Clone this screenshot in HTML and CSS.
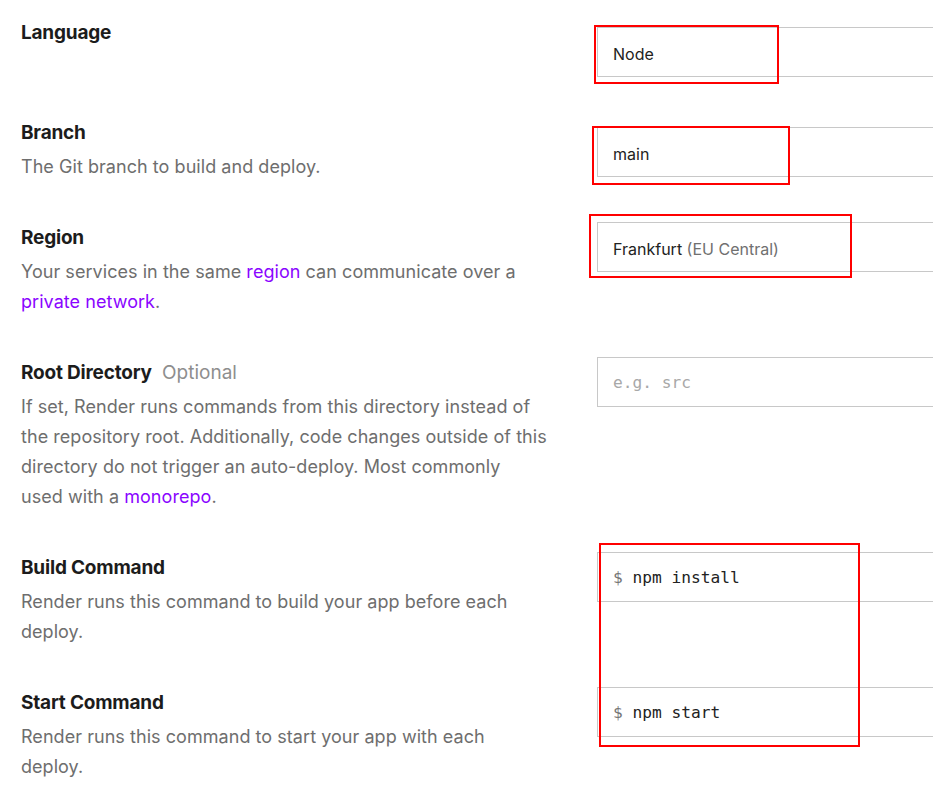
FILE: index.html
```html
<!DOCTYPE html>
<html lang="en">
<head>
<meta charset="utf-8">
<title>Service settings</title>
<link rel="stylesheet" href="styles.css">
</head>
<body>
<div class="page">
  <div class="row">
    <div class="info">
      <div class="title">Language</div>
    </div>
    <div class="field field-high">
      <div class="input">Node</div>
    </div>
  </div>

  <div class="row">
    <div class="info">
      <div class="title">Branch</div>
      <p class="desc">The Git branch to build and deploy.</p>
    </div>
    <div class="field field-high">
      <div class="input">main</div>
    </div>
  </div>

  <div class="row">
    <div class="info">
      <div class="title">Region</div>
      <p class="desc">Your services in the same <a href="#">region</a> can communicate over a <a href="#">private network</a>.</p>
    </div>
    <div class="field">
      <div class="input">Frankfurt <span class="muted">(EU Central)</span></div>
    </div>
  </div>

  <div class="row">
    <div class="info">
      <div class="title">Root Directory <span class="optional">Optional</span></div>
      <p class="desc">If set, Render runs commands from this directory instead of the repository root. Additionally, code changes outside of this directory do not trigger an auto-deploy. Most commonly<br>used with a <a href="#">monorepo</a>.</p>
    </div>
    <div class="field">
      <div class="input mono placeholder">e.g. src</div>
    </div>
  </div>

  <div class="row">
    <div class="info">
      <div class="title">Build Command</div>
      <p class="desc">Render runs this command to build your app before each deploy.</p>
    </div>
    <div class="field">
      <div class="input mono"><span class="prompt">$</span> npm install</div>
    </div>
  </div>

  <div class="row">
    <div class="info">
      <div class="title">Start Command</div>
      <p class="desc">Render runs this command to start your app with each deploy.</p>
    </div>
    <div class="field">
      <div class="input mono"><span class="prompt">$</span> npm start</div>
    </div>
  </div>

  <div class="mark mark-1"></div>
  <div class="mark mark-2"></div>
  <div class="mark mark-3"></div>
  <div class="mark mark-4"></div>
</div>
</body>
</html>
```

FILE: styles.css
```css
html, body {
  margin: 0;
  padding: 0;
  background: #ffffff;
  overflow: hidden;
}

body {
  font-family: Inter, "Noto Sans", "Liberation Sans", sans-serif;
  color: #1c1c1c;
}

.page {
  position: relative;
  padding: 20px 0 0 21px;
}

.row {
  display: grid;
  grid-template-columns: 527px 420px;
  column-gap: 49px;
  align-items: start;
  margin-bottom: 43px;
}

.title {
  font-size: 19px;
  line-height: 26px;
  font-weight: 700;
  color: #1c1c1c;
  letter-spacing: -0.2px;
  white-space: nowrap;
}

.optional {
  font-weight: 400;
  color: #8e8e8e;
  margin-left: 6px;
  letter-spacing: 0;
}

.desc {
  margin: 6px 0 0;
  font-size: 18px;
  line-height: 30px;
  color: #6e6e6e;
  letter-spacing: 0.05px;
}

.desc a {
  color: #8a05ff;
  text-decoration: none;
}

.field {
  margin-top: -3px;
}

.field-high {
  margin-top: 7px;
}

.input {
  box-sizing: border-box;
  height: 50px;
  border: 1px solid #c8c8c8;
  padding: 3px 15px 0;
  display: flex;
  align-items: center;
  font-size: 16px;
  color: #222222;
  white-space: pre;
}

.muted {
  color: #707070;
}

.mono {
  font-family: "DejaVu Sans Mono", "Liberation Mono", monospace;
  font-size: 16.2px;
  padding-top: 1px;
}

.placeholder {
  color: #a8a8a8;
}

.prompt {
  color: #777777;
}

.mark {
  position: absolute;
  border: 2px solid #ff0000;
  box-sizing: border-box;
  pointer-events: none;
}

.mark-1 { left: 594px; top: 25px;  width: 185px; height: 59px; }
.mark-2 { left: 592px; top: 126px; width: 198px; height: 59px; }
.mark-3 { left: 589px; top: 214px; width: 263px; height: 64px; }
.mark-4 { left: 599px; top: 543px; width: 261px; height: 204px; }
```
